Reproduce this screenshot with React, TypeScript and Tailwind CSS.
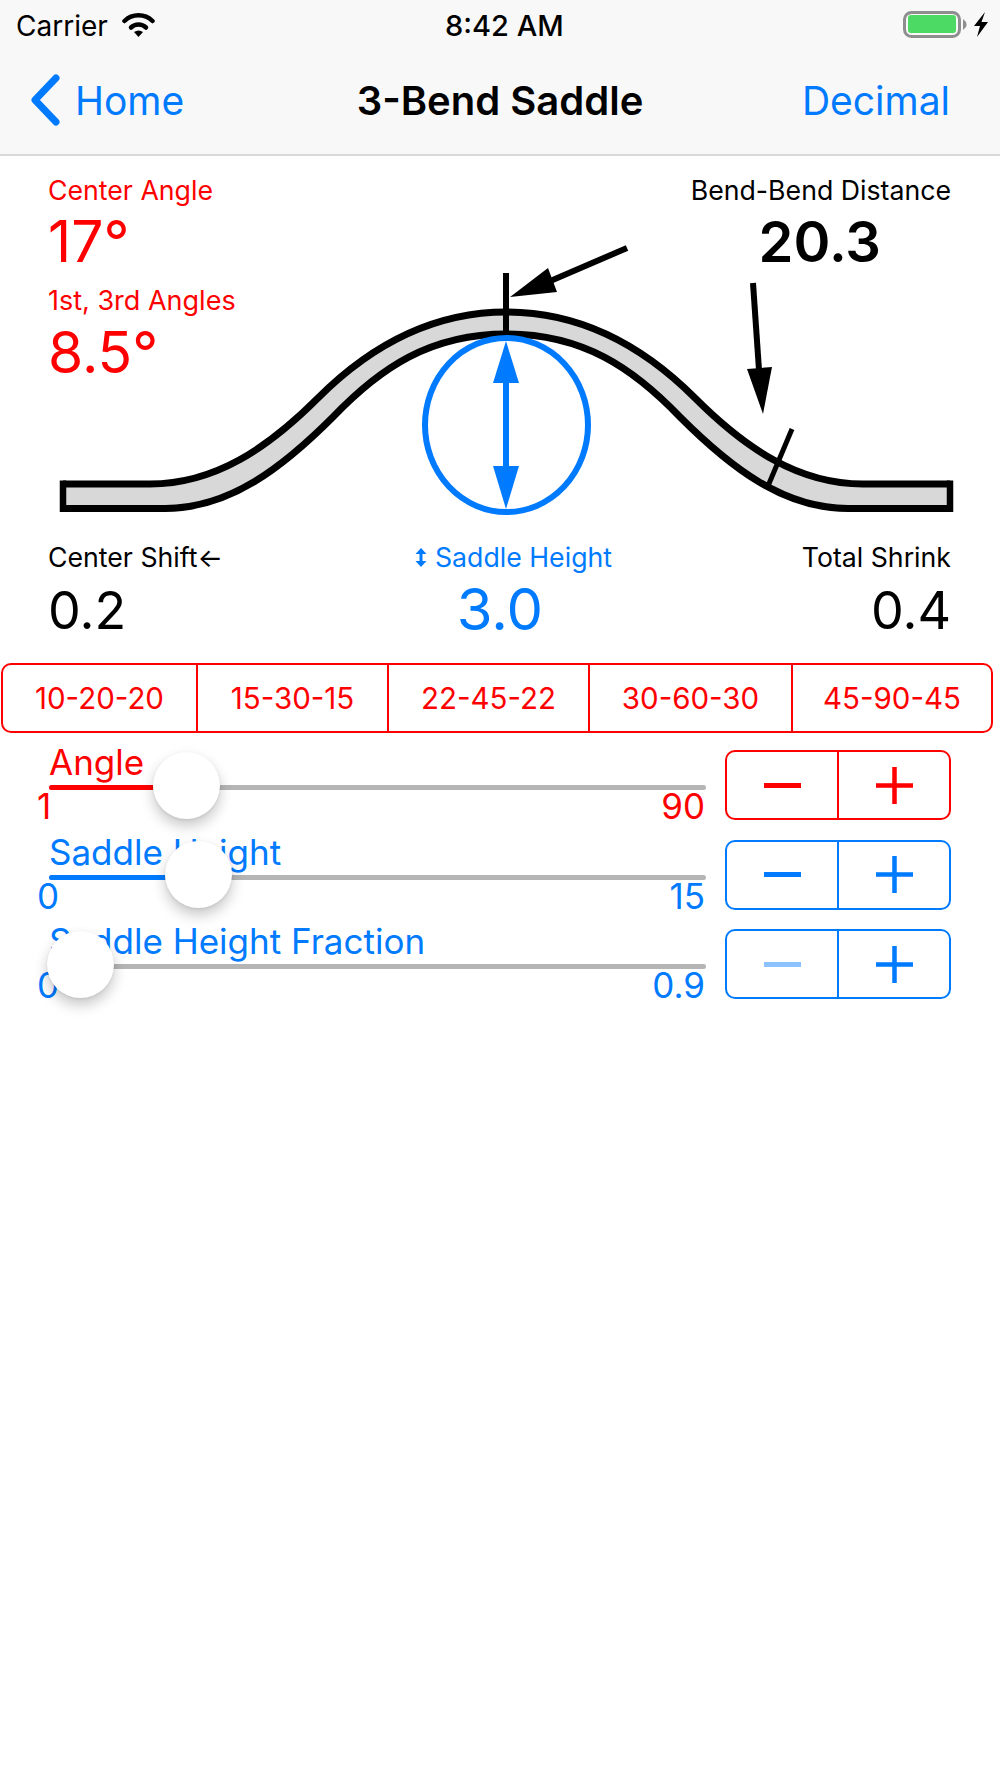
import React from "react";

const blue = "#007aff";
const red = "#ff0000";

function Wifi() {
  return (
    <svg width="33" height="25" viewBox="0 0 33 25" className="mb-[3px] block">
      <path d="M2.5 9 A20 20 0 0 1 30.5 9" fill="none" stroke="#000" strokeWidth="4.5" strokeLinecap="round" />
      <path d="M9 15.5 A11 11 0 0 1 24 15.5" fill="none" stroke="#000" strokeWidth="4.5" strokeLinecap="round" />
      <path d="M12 20 Q16.5 17 21 20 L16.5 25 Z" fill="#000" />
    </svg>
  );
}

function Battery() {
  return (
    <svg width="88" height="28" viewBox="0 0 88 28" className="-mt-[2px] block">
      <rect x="1.5" y="1.5" width="55" height="24" rx="7" fill="none" stroke="#8e8e8e" strokeWidth="3" />
      <rect x="5" y="4" width="48" height="18" rx="3" fill="#4cd964" />
      <path d="M60 8 L63 11 Q64 13.5 63 16 L60 19 Z" fill="#8e8e8e" />
      <path d="M82 1 L71 15 H77 L74 26 L85 11 H78.5 Z" fill="#000" />
    </svg>
  );
}

function Diagram() {
  const upper =
    "M63 484 L150 484 C215 484 268 448 318 398 C368 348 430 312 506.5 312 C583 312 645 348 695 398 C745 448 798 484 863 484 L950 484";
  const lower =
    "M63 508.5 L165 508.5 C230 508.5 283 467 333 417 C380 368 430 334 506.5 334 C583 334 633 368 680 417 C730 467 783 508.5 848 508.5 L950 508.5";
  const lowerBack =
    "L848 508.5 C783 508.5 730 467 680 417 C633 368 583 334 506.5 334 C430 334 380 368 333 417 C283 467 230 508.5 165 508.5 L63 508.5 Z";
  return (
    <svg width="1000" height="360" viewBox="0 160 1000 360" className="absolute left-0 top-[4px]">
      <path d={`${upper} L950 508.5 ${lowerBack}`} fill="#d8d8d8" />
      <path d={upper} fill="none" stroke="#000" strokeWidth="7" />
      <path d={lower} fill="none" stroke="#000" strokeWidth="7" />
      <path d="M63 480.5 V512 M950 480.5 V512" stroke="#000" strokeWidth="6.5" />
      <path d="M506 273 V335" stroke="#000" strokeWidth="6" />
      <path d="M627 248 L548 282" stroke="#000" strokeWidth="6" />
      <path d="M510 297 L548 268 L557 292 Z" fill="#000" />
      <path d="M753 283 L759 370" stroke="#000" strokeWidth="6" />
      <path d="M763 414 L747 369 L772 367 Z" fill="#000" />
      <path d="M792 429 L768 486" stroke="#000" strokeWidth="5" />
      <ellipse cx="506.5" cy="425" rx="81.5" ry="87" fill="none" stroke={blue} strokeWidth="6" />
      <path d="M506 380 V470" stroke={blue} strokeWidth="6" />
      <path d="M506 341 L519 383 L493 383 Z" fill={blue} />
      <path d="M506 509 L519 466 L493 466 Z" fill={blue} />
    </svg>
  );
}

function Stepper({ color, dim }: { color: string; dim?: boolean }) {
  return (
    <div className="flex h-[70px] w-[226px] rounded-[10px] border-2" style={{ borderColor: color }}>
      <div className="flex w-[112px] items-center justify-center border-r-2" style={{ borderColor: color }}>
        <div className="h-[5px] w-[37px]" style={{ backgroundColor: color, opacity: dim ? 0.45 : 1 }} />
      </div>
      <div className="flex flex-1 items-center justify-center">
        <svg width="37" height="37" viewBox="0 0 37 37" className="block">
          <path d="M0 18.5 H37 M18.5 0 V37" stroke={color} strokeWidth="4.5" />
        </svg>
      </div>
    </div>
  );
}

function SliderRow({
  label, min, max, color, fill, thumb, dim,
}: { label: string; min: string; max: string; color: string; fill: number; thumb: number; dim?: boolean }) {
  return (
    <div className="flex h-[89.5px] items-start pl-[49px]">
      <div className="relative w-[657px]" style={{ color }}>
        <div className="-mt-[6px] h-[37px] text-[35px] leading-[37px]">{label}</div>
        <div className="mt-[4px] h-[5px] rounded-full bg-[#b5b5b5]">
          <div className="h-[5px] rounded-l-full" style={{ width: fill, backgroundColor: color }} />
        </div>
        <div className="-ml-[12px] -mt-[4px] flex justify-between text-[35px] leading-[40px]">
          <span>{min}</span>
          <span className="pr-[1px]">{max}</span>
        </div>
        <div
          className="absolute top-[1.5px] h-[67px] w-[67px] rounded-full bg-white shadow-[0_7px_14px_rgba(0,0,0,0.22),0_1px_3px_rgba(0,0,0,0.08)]"
          style={{ left: thumb }}
        />
      </div>
      <div className="ml-[19px]">
        <Stepper color={color} dim={dim} />
      </div>
    </div>
  );
}

export default function App() {
  const presets: [string, string][] = [
    ["10-20-20", "w-[195px]"],
    ["15-30-15", "w-[191px]"],
    ["22-45-22", "w-[201px]"],
    ["30-60-30", "w-[203px]"],
    ["45-90-45", "flex-1"],
  ];
  return (
    <div className="min-h-[1778px] w-[1000px] bg-white text-black" style={{ fontFamily: "Inter, 'Liberation Sans', sans-serif" }}>
      <header className="h-[156px] border-b-2 border-[#d9d9d9] bg-[#f8f8f8]">
        <div className="relative flex h-[45px] items-center justify-between pl-[16px] pr-[9px] pt-[7px]">
          <div className="flex items-center gap-[14px]">
            <span className="text-[28px] leading-[32px]">Carrier</span>
            <Wifi />
          </div>
          <span className="absolute left-[445px] top-[10px] text-[29px] font-medium leading-[32px]">8:42 AM</span>
          <Battery />
        </div>
        <div className="flex h-[109px] items-center pl-[30px] pr-[50px] pt-[3px]">
          <div className="flex flex-1 items-center gap-[15px]" style={{ color: blue }}>
            <svg width="30" height="52" viewBox="0 0 30 52" className="-mt-[3px] block">
              <path d="M26 4 L5 26 L26 48" fill="none" stroke={blue} strokeWidth="7" strokeLinecap="round" strokeLinejoin="round" />
            </svg>
            <span className="text-[39px] leading-[46px]">Home</span>
          </div>
          <div className="ml-[20px] text-[40px] font-semibold leading-[46px]">3-Bend Saddle</div>
          <div className="flex-1 text-right text-[39px] leading-[46px]" style={{ color: blue }}>Decimal</div>
        </div>
      </header>

      <section className="relative h-[507px]">
        <Diagram />
        <div className="relative flex justify-between px-[49px] pt-[17px]">
          <div className="-ml-[1px] text-[#ff0000]">
            <div className="text-[26.7px] leading-[34px]">Center Angle</div>
            <div className="mt-[1px] text-[57px] leading-[68px]">17°</div>
            <div className="mt-[8px] text-[27px] leading-[34px]">1st, 3rd Angles</div>
            <div className="mt-[1px] text-[57px] leading-[68px]">8.5°</div>
          </div>
          <div className="flex flex-col items-end">
            <div className="text-[26.7px] leading-[34px]">Bend-Bend Distance</div>
            <div className="mt-[1px] pr-[70px] text-[56px] font-semibold leading-[68px]">20.3</div>
          </div>
        </div>
        <div className="absolute inset-x-[49px] top-[384px] grid grid-cols-[1fr_auto_1fr]">
          <div className="-ml-[1px]">
            <div className="text-[26.7px] leading-[34px]">Center Shift←</div>
            <div className="mt-[3px] text-[52px] leading-[68px]">0.2</div>
          </div>
          <div className="flex flex-col items-center" style={{ color: blue }}>
            <div className="ml-[27px] flex items-center gap-[8px] text-[26.7px] leading-[34px]">
              <svg width="12" height="19" viewBox="0 0 12 19" className="block">
                <path d="M6 0 L11.5 6 H7.5 V13 H11.5 L6 19 L0.5 13 H4.5 V6 H0.5 Z" fill={blue} />
              </svg>
              <span>Saddle Height</span>
            </div>
            <div className="mt-[1px] text-[58px] leading-[68px]">3.0</div>
          </div>
          <div className="text-right">
            <div className="text-[26.7px] leading-[34px]">Total Shrink</div>
            <div className="mt-[3px] text-[52px] leading-[68px]">0.4</div>
          </div>
        </div>
      </section>

      <div className="mx-[1px] flex h-[70px] w-[992px] rounded-[10px] border-2 border-[#ff0000] text-[29.5px] text-[#ff0000]">
        {presets.map(([t, w], i) => (
          <div key={t} className={`flex items-center justify-center ${w} ${i < 4 ? "border-r-2 border-[#ff0000]" : ""}`}>
            {t}
          </div>
        ))}
      </div>

      <div className="mt-[17px]">
        <SliderRow label="Angle" min="1" max="90" color={red} fill={104} thumb={104} />
        <SliderRow label="Saddle Height" min="0" max="15" color={blue} fill={116} thumb={116} />
        <SliderRow label="Saddle Height Fraction" min="0" max="0.9" color={blue} fill={0} thumb={-2} dim />
      </div>
    </div>
  );
}
